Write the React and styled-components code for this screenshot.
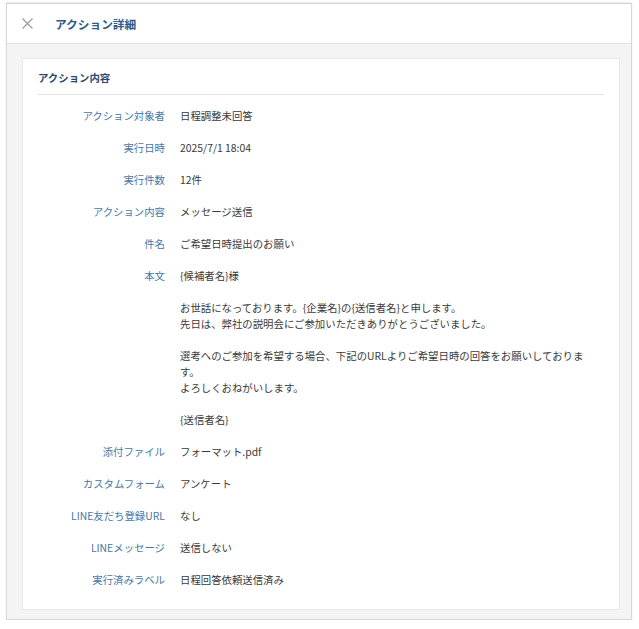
import styled, { createGlobalStyle } from "styled-components";

const GlobalStyle = createGlobalStyle`
    html, body {
        margin: 0;
        padding: 0;
        background: #ffffff;
    }
    body {
        font-family: "Noto Sans CJK JP", "Noto Sans", sans-serif;
        color: #333333;
    }
`;

const rows = [
    { label: "アクション対象者", value: "日程調整未回答" },
    { label: "実行日時", value: "2025/7/1 18:04" },
    { label: "実行件数", value: "12件" },
    { label: "アクション内容", value: "メッセージ送信" },
    { label: "件名", value: "ご希望日時提出のお願い" },
    {
        label: "本文",
        value: [
            "{候補者名}様",
            "",
            "お世話になっております。{企業名}の{送信者名}と申します。",
            "先日は、弊社の説明会にご参加いただきありがとうございました。",
            "",
            "選考へのご参加を希望する場合、下記のURLよりご希望日時の回答をお願いしております。",
            "よろしくおねがいします。",
            "",
            "{送信者名}",
        ].join("\n"),
    },
    { label: "添付ファイル", value: "フォーマット.pdf" },
    { label: "カスタムフォーム", value: "アンケート" },
    { label: "LINE友だち登録URL", value: "なし" },
    { label: "LINEメッセージ", value: "送信しない" },
    { label: "実行済みラベル", value: "日程回答依頼送信済み" },
];

const CloseIcon = () => (
    <svg width="11" height="11" viewBox="0 0 11 11">
        <path d="M0.5 0.5 L10.5 10.5 M10.5 0.5 L0.5 10.5" stroke="#9a9a9a" strokeWidth="1.2" fill="none" />
    </svg>
);

export default function App() {
    return (
        <>
            <GlobalStyle />
            <Panel>
                <Header>
                    <CloseButton>
                        <CloseIcon />
                    </CloseButton>
                    <HeaderTitle>アクション詳細</HeaderTitle>
                </Header>
                <Body>
                    <Card>
                        <CardTitle>アクション内容</CardTitle>
                        <DetailList>
                            {rows.map((row) => (
                                <Row key={row.label}>
                                    <Label>{row.label}</Label>
                                    <Value>{row.value}</Value>
                                </Row>
                            ))}
                        </DetailList>
                    </Card>
                </Body>
            </Panel>
        </>
    );
}

const Panel = styled.div`
    margin: 3px 7px 0 6px;
    border: 1px solid #d8d8d8;
    border-top-color: #d0d0d0;
    box-shadow: 0 -1px 2px rgba(0, 0, 0, 0.08);
    background: #f4f4f4;
`;

const Header = styled.div`
    height: 39px;
    display: flex;
    align-items: center;
    background: #ffffff;
    border-bottom: 1px solid #e2e2e2;
    padding-left: 15px;
`;

const CloseButton = styled.div`
    width: 11px;
    height: 11px;
    display: flex;
    margin-right: 22px;
    cursor: pointer;
`;

const HeaderTitle = styled.div`
    font-size: 11.7px;
    font-weight: bold;
    color: #2d5b88;
    line-height: 16px;
`;

const Body = styled.div`
    padding: 14px 11px 9px 15px;
`;

const Card = styled.div`
    background: #ffffff;
    border: 1px solid #e8e8e8;
    padding: 11px 15px 13px;
`;

const CardTitle = styled.div`
    font-size: 10.4px;
    font-weight: bold;
    color: #2b4a6b;
    line-height: 16px;
    padding-bottom: 8px;
    border-bottom: 1px solid #e4e4e4;
`;

const DetailList = styled.div`
    padding-top: 5px;
`;

const Row = styled.div`
    display: grid;
    grid-template-columns: 127px 1fr;
    column-gap: 15px;
    padding: 8px 0;
    font-size: 10.4px;
    line-height: 16px;
`;

const Label = styled.div`
    text-align: right;
    color: #4677a5;
    white-space: nowrap;
`;

const Value = styled.div`
    color: #3a3a3a;
    white-space: pre-wrap;
    padding-right: 12px;
`;
